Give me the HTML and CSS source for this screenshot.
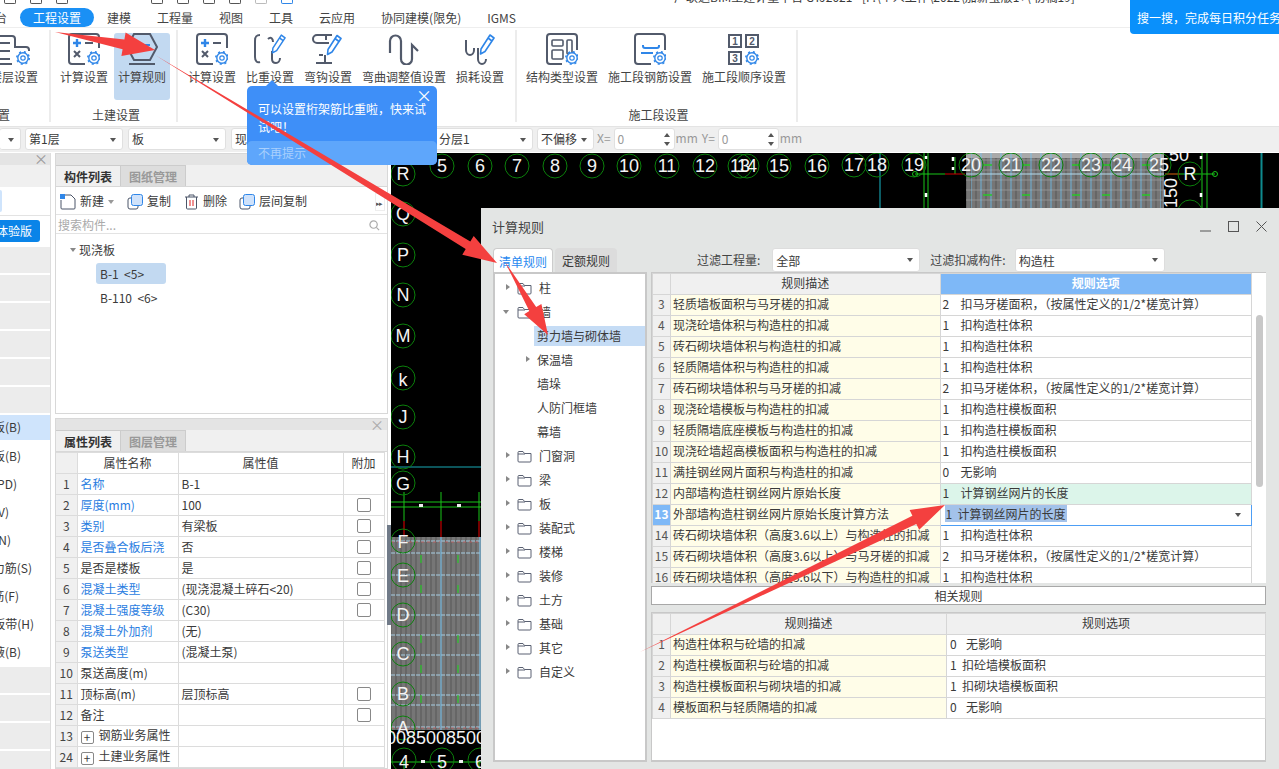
FILE: index.html
```html
<!DOCTYPE html>
<html lang="zh">
<head>
<meta charset="utf-8">
<title>计算规则</title>
<link rel="stylesheet" href="styles.css">
</head>
<body>
<svg class="defs" width="0" height="0">
  <defs>
    <symbol id="gear" viewBox="0 0 14 14">
      <circle cx="7" cy="7" r="5.2" fill="#fff" stroke="#2f86e8" stroke-width="1.4"/>
      <circle cx="7" cy="7" r="6.2" fill="none" stroke="#2f86e8" stroke-width="1.6" stroke-dasharray="2 2.9"/>
      <circle cx="7" cy="7" r="2.2" fill="none" stroke="#2f86e8" stroke-width="1.2"/>
    </symbol>
    <symbol id="pencil" viewBox="0 0 16 22">
      <path d="M11 1.5l4 3L6 18l-4.500 2.500L2 15.500z" fill="#fff" stroke="#2f86e8" stroke-width="1.6" stroke-linejoin="round"/>
      <path d="M9 4.500l4 3" stroke="#2f86e8" stroke-width="1.6"/>
    </symbol>
    <symbol id="calc" viewBox="0 0 32 32">
      <path d="M17 31H4a3 3 0 0 1-3-3V4a3 3 0 0 1 3-3h24a3 3 0 0 1 3 3v11" fill="none" stroke="#525a6b" stroke-width="2"/>
      <path d="M5 10h8M9 6v8" stroke="#2f86e8" stroke-width="2.400"/>
      <path d="M17 10h8" stroke="#525a6b" stroke-width="2"/>
      <path d="M6 18l6 6M12 18l-6 6" stroke="#525a6b" stroke-width="2"/>
    </symbol>
    <symbol id="folder" viewBox="0 0 15 13">
      <path d="M1 2.500a1 1 0 0 1 1-1h4l1.500 2H14v7.500a1 1 0 0 1-1 1H2a1 1 0 0 1-1-1z" fill="none" stroke="#5a6172" stroke-width="1"/>
      <path d="M1 4h7" stroke="#5a6172" stroke-width="1"/>
    </symbol>
    <symbol id="copy" viewBox="0 0 16 16">
      <rect x="1" y="4" width="10" height="11" rx="2" fill="#fff" stroke="#4b5568"/>
      <rect x="4.500" y="0.500" width="11" height="11" rx="2" fill="#cfe2fb" stroke="#2f86e8"/>
    </symbol>
  </defs>
</svg>

<div class="page">
  <div class="strip">
    <span class="stub"></span><span class="stub"></span><span class="stub"></span>
    <span class="stub stub-far"></span><span class="stub"></span><span class="stub"></span><span class="stub"></span>
    <span class="stub stub-faint"></span><span class="stub stub-blue"></span>
    <span class="app-title">广联达BIM土建计量平台 GTJ2021 - [F:\个人工作\2022\加薪宝版1+\ 初稿19]</span>
  </div>

  <nav class="menu">
    <span class="menu-item menu-cut">平台</span>
    <span class="menu-item menu-on">工程设置</span>
    <span class="menu-item">建模</span>
    <span class="menu-item">工程量</span>
    <span class="menu-item">视图</span>
    <span class="menu-item">工具</span>
    <span class="menu-item">云应用</span>
    <span class="menu-item">协同建模(限免)</span>
    <span class="menu-item">IGMS</span>
  </nav>

  <section class="ribbon">
    <div class="group group-a">
      <div class="tools">
        <div class="tool tool-clip">
          <svg class="ico" viewBox="0 0 32 32"><path d="M2 3h12a3 3 0 0 1 3 3v8h11a3 3 0 0 1 3 3v1M2 10h10M2 18h10M2 26h10M2 31h12" fill="none" stroke="#525a6b" stroke-width="2"/><use href="#gear" x="18" y="18" width="14" height="14"/></svg>
          <span>楼层设置</span>
        </div>
      </div>
      <div class="group-name">设置</div>
    </div>
    <div class="group group-b">
      <div class="tools">
        <div class="tool">
          <svg class="ico"><use href="#calc"/><use href="#gear" x="19" y="18" width="14" height="14"/></svg>
          <span>计算设置</span>
        </div>
        <div class="tool tool-on">
          <svg class="ico" viewBox="0 0 32 32"><path d="M8 1h16l7 13-7 13H8L1 14z" fill="none" stroke="#525a6b" stroke-width="2"/><path d="M8 12h6M11 9v6" stroke="#2f86e8" stroke-width="2"/><path d="M18 12h6" stroke="#2f86e8" stroke-width="2"/><path d="M3 31h26" stroke="#525a6b" stroke-width="2"/></svg>
          <span>计算规则</span>
        </div>
      </div>
      <div class="group-name">土建设置</div>
    </div>
    <div class="group group-c">
      <div class="tools">
        <div class="tool">
          <svg class="ico"><use href="#calc"/><use href="#gear" x="19" y="18" width="14" height="14"/></svg>
          <span>计算设置</span>
        </div>
        <div class="tool">
          <svg class="ico" viewBox="0 0 32 32"><path d="M6 2C2 2 1 4 1 8v16c0 4 2 6 5 5M14 6c3-3 5 0 5 3M18 18v8c0 3 2 4 4 4s4-2 4-5" fill="none" stroke="#525a6b" stroke-width="2"/><use href="#pencil" x="17" y="0" width="15" height="22"/></svg>
          <span>比重设置</span>
        </div>
        <div class="tool">
          <svg class="ico" viewBox="0 0 32 32"><path d="M20 2H5a4 4 0 0 0 0 8h12M14 3v4M13 22v8M4 30h16M11 22H7" fill="none" stroke="#525a6b" stroke-width="2"/><use href="#pencil" x="14" y="1" width="16" height="22"/></svg>
          <span>弯钩设置</span>
        </div>
        <div class="tool">
          <svg class="ico" viewBox="0 0 32 32"><path d="M2 19V7a5.500 5.500 0 0 1 11 0v18a5.500 5.500 0 0 0 11 0V11l6 6" fill="none" stroke="#525a6b" stroke-width="2.200" transform="translate(0 1)"/></svg>
          <span>弯曲调整值设置</span>
        </div>
        <div class="tool">
          <svg class="ico" viewBox="0 0 32 32"><path d="M2 7v10c0 3 2 5 4 5s4-2 4-5v-2M14 15v11c0 3 2 5 4 5s4-2 4-5" fill="none" stroke="#525a6b" stroke-width="2"/><use href="#pencil" x="15" y="0" width="16" height="23"/></svg>
          <span>损耗设置</span>
        </div>
      </div>
    </div>
    <div class="group group-d">
      <div class="tools">
        <div class="tool">
          <svg class="ico" viewBox="0 0 32 32"><path d="M16 31H4a3 3 0 0 1-3-3V4a3 3 0 0 1 3-3h24a3 3 0 0 1 3 3v13" fill="none" stroke="#525a6b" stroke-width="2"/><rect x="6" y="7" width="11" height="6" rx="1" fill="none" stroke="#525a6b" stroke-width="1.600"/><rect x="21" y="7" width="5" height="14" rx="1" fill="none" stroke="#525a6b" stroke-width="1.600"/><rect x="6" y="17" width="11" height="9" rx="1" fill="none" stroke="#525a6b" stroke-width="1.600"/><use href="#gear" x="19" y="18" width="14" height="14"/></svg>
          <span>结构类型设置</span>
        </div>
        <div class="tool">
          <svg class="ico" viewBox="0 0 32 32"><path d="M17 31H4a3 3 0 0 1-3-3V4a3 3 0 0 1 3-3h24a3 3 0 0 1 3 3v13" fill="none" stroke="#525a6b" stroke-width="2"/><path d="M9 12v1a2 2 0 0 0 2 2h12a2 2 0 0 0 2-2v-1M7 20h12" fill="none" stroke="#2f86e8" stroke-width="2"/><use href="#gear" x="19" y="18" width="14" height="14"/></svg>
          <span>施工段钢筋设置</span>
        </div>
        <div class="tool">
          <svg class="ico" viewBox="0 0 32 32">
            <g fill="none" stroke="#525a6b" stroke-width="2"><rect x="1" y="2" width="12" height="12"/><rect x="18" y="2" width="12" height="12"/><rect x="1" y="19" width="12" height="12"/></g>
            <g class="ico-digit"><text x="7" y="12">1</text><text x="24" y="12">2</text><text x="7" y="29">3</text></g>
            <use href="#gear" x="17" y="18" width="14" height="14"/></svg>
          <span>施工段顺序设置</span>
        </div>
      </div>
      <div class="group-name">施工段设置</div>
    </div>
  </section>

  <div class="bar">
    <span class="pick pick-a"></span>
    <span class="pick pick-b">第1层</span>
    <span class="pick pick-b">板</span>
    <span class="pick pick-c">现浇板</span>
    <span class="pick pick-d">分层1</span>
    <span class="pick pick-e">不偏移</span>
    <span class="dim">X=</span>
    <span class="spin">0</span>
    <span class="dim">mm</span>
    <span class="dim dim-y">Y=</span>
    <span class="spin">0</span>
    <span class="dim">mm</span>
  </div>

  <main class="main">
    <aside class="nav">
      <div class="nav-head">×</div>
      <div class="nav-pad"></div>
      <div class="nav-white"><i></i></div>
      <div class="nav-btn-row"><span class="nav-btn">体验版</span></div>
      <div class="nav-gray"></div><div class="nav-gray"></div><div class="nav-gray"></div>
      <div class="nav-gray"></div><div class="nav-gray"></div><div class="nav-gray"></div>
      <div class="nav-row nav-sel e21"><span>现浇板(B)</span></div>
      <div class="nav-row e21"><span>叠合板(B)</span></div>
      <div class="nav-row e17"><span>预制板(PD)</span></div>
      <div class="nav-row e9"><span>柱帽(V)</span></div>
      <div class="nav-row e11"><span>板洞(N)</span></div>
      <div class="nav-row e32"><span>板受力筋(S)</span></div>
      <div class="nav-row e19"><span>板负筋(F)</span></div>
      <div class="nav-row e34"><span>楼层板带(H)</span></div>
      <div class="nav-row e21"><span>板加腋(B)</span></div>
      <div class="nav-gray nav-gray-first"></div><div class="nav-gray"></div><div class="nav-gray"></div><div class="nav-gray"></div>
    </aside>

    <div class="side">
      <section class="card card-top">
        <div class="card-head"></div>
        <div class="tabs">
          <span class="tab tab-on">构件列表</span>
          <span class="tab">图纸管理</span>
        </div>
        <div class="actions">
          <span class="act act-new">
            <svg class="act-ico" viewBox="0 0 16 16"><path d="M4 1h7l4 4v9a1 1 0 0 1-1 1H2a1 1 0 0 1-1-1V6" fill="none" stroke="#4b5568"/><rect x="0" y="0" width="5" height="5" fill="#2f86e8"/></svg>新建<i class="caret"></i>
          </span>
          <span class="act act-copy"><svg class="act-ico"><use href="#copy"/></svg>复制</span>
          <span class="act act-del">
            <svg class="act-ico act-trash" viewBox="0 0 13 16"><path d="M0 3h13M4 3V1h5v2M1.500 3v11a1 1 0 0 0 1 1h8a1 1 0 0 0 1-1V3" fill="none" stroke="#4b5568"/><path d="M5 6v6M8 6v6" stroke="#e02020"/></svg>删除
          </span>
          <span class="act"><svg class="act-ico"><use href="#copy"/></svg>层间复制</span>
          <span class="act-more">▸▸</span>
        </div>
        <div class="search">
          <span>搜索构件...</span>
          <svg class="search-ico" viewBox="0 0 12 12"><circle cx="5" cy="5" r="4" fill="none" stroke="#aaa" stroke-width="1.300"/><path d="M8 8l3 3" stroke="#aaa" stroke-width="1.300"/></svg>
        </div>
        <div class="parts">
          <div class="part-root"><i class="tri-down"></i>现浇板</div>
          <div class="part part-on">B-1 &nbsp;&lt;5&gt;</div>
          <div class="part">B-110 &nbsp;&lt;6&gt;</div>
        </div>
      </section>

      <section class="card card-bottom">
        <div class="card-head"></div>
        <div class="tabs">
          <span class="tab tab-on">属性列表</span>
          <span class="tab">图层管理</span>
        </div>
        <table class="props">
          <colgroup><col class="c-n"><col class="c-k"><col class="c-v"><col class="c-x"></colgroup>
          <tr class="props-head"><td></td><td>属性名称</td><td>属性值</td><td>附加</td></tr>
          <tr><td class="num">1</td><td class="lnk">名称</td><td>B-1</td><td></td></tr>
          <tr><td class="num">2</td><td class="lnk">厚度(mm)</td><td>100</td><td class="chk"><i></i></td></tr>
          <tr><td class="num">3</td><td class="lnk">类别</td><td>有梁板</td><td class="chk"><i></i></td></tr>
          <tr><td class="num">4</td><td class="lnk">是否叠合板后浇</td><td>否</td><td class="chk"><i></i></td></tr>
          <tr><td class="num">5</td><td>是否是楼板</td><td>是</td><td class="chk"><i></i></td></tr>
          <tr><td class="num">6</td><td class="lnk">混凝土类型</td><td>(现浇混凝土碎石&lt;20)</td><td class="chk"><i></i></td></tr>
          <tr><td class="num">7</td><td class="lnk">混凝土强度等级</td><td>(C30)</td><td class="chk"><i></i></td></tr>
          <tr><td class="num">8</td><td class="lnk">混凝土外加剂</td><td>(无)</td><td></td></tr>
          <tr><td class="num">9</td><td class="lnk">泵送类型</td><td>(混凝土泵)</td><td></td></tr>
          <tr><td class="num">10</td><td>泵送高度(m)</td><td></td><td></td></tr>
          <tr><td class="num">11</td><td>顶标高(m)</td><td>层顶标高</td><td class="chk"><i></i></td></tr>
          <tr><td class="num">12</td><td>备注</td><td></td><td class="chk"><i></i></td></tr>
          <tr><td class="num">13</td><td><b class="plus">+</b>钢筋业务属性</td><td></td><td></td></tr>
          <tr><td class="num">24</td><td><b class="plus">+</b>土建业务属性</td><td></td><td></td></tr>
        </table>
      </section>
    </div>

    <div class="grip"><i></i></div>

    <div class="cad">
      <svg class="cad-art" viewBox="391 153 888 616">
        <defs>
          <pattern id="stripe" width="5" height="5" patternUnits="userSpaceOnUse"><rect width="5" height="5" fill="#767676"/><rect width="2" height="5" fill="#666"/></pattern>
          <pattern id="vblue" width="10" height="10" patternUnits="userSpaceOnUse"><path d="M1 0V10" stroke="#7cc0e6" stroke-width="1"/></pattern>
        </defs>

        <path d="M391 502H481M391 507H481M404 492V521M441 492V521M479 492V521" stroke="#19c419" stroke-width="1"/>
        <path d="M404 521V537M441 521V537M479 521V537" stroke="#c40000" stroke-width="1.200"/>
        <path d="M391 467H481" stroke="#18a8b4"/>
        <rect x="419" y="504" width="4" height="3" fill="#eee"/><rect x="457" y="504" width="4" height="3" fill="#eee"/>

        <rect x="391" y="537" width="90" height="193" fill="url(#stripe)"/>
        <path d="M391 541H481M391 553H481M391 575H481M391 595H481M391 615H481M391 635H481M391 655H481M391 675H481M391 695H481M391 705H481M391 727H481" stroke="#a6cde2" stroke-dasharray="4 1" stroke-width="1"/>
        <path d="M391 542H481M391 728H481" stroke="#c65a5a" stroke-dasharray="3 3" stroke-width=".8"/>
        <path d="M441 537V730M480 537V730" stroke="#7cc0e6" stroke-width="1.200"/>
        <path d="M421 555v8M458 555v8M421 585v8M458 585v8M421 635v8M458 635v8M421 665v8M458 665v8M421 695v8M458 695v8" stroke="#28c828" stroke-width="1.200"/>

        <path d="M391 762H481M404 762V769M441 762V769M479 762V769" stroke="#19c419"/>
        <rect x="421" y="760" width="4" height="3" fill="#eee"/><rect x="459" y="760" width="4" height="3" fill="#eee"/>

        <rect x="966" y="153" width="198" height="55" fill="url(#stripe)"/>
        <rect x="966" y="153" width="198" height="5" fill="#a9a9a9"/>
        <path d="M966 160H1164M966 170H1164M966 180H1164M966 190H1164M966 200H1164" stroke="#929292" stroke-width="1"/>
        <rect x="971" y="153" width="190" height="55" fill="url(#vblue)"/>
        <path d="M966 174H1164" stroke="#b4dcee"/>
        <path d="M983 165h9M1022 165h8M1072 165h8M1102 165h8M1142 165h8M983 195h9M1022 195h8M1072 195h8M1102 195h8M1142 195h8" stroke="#28c828" stroke-width="1.500"/>
        <path d="M880 153V208" stroke="#18b8c8"/>
        <path d="M1261.500 153V208" stroke="#0e8a8e" stroke-width="2"/>
        <path d="M924 153V208M928 153V208M1202 153V208M1207 153V208" stroke="#19c419"/>
        <path d="M915 174H945M955 157V174M1165 174H1215" stroke="#19c419"/>
        <path d="M945 174H965M1165 174H1180" stroke="#d00000" stroke-width="1.200"/>
        <circle cx="915" cy="174" r="2.500" fill="none" stroke="#19c419"/>
        <circle cx="1215" cy="174" r="2.500" fill="none" stroke="#19c419"/>
        <path d="M926 156v3M926 193v4M953 157v4M953 167v3M1201 156v3M1201 193v4" stroke="#fff" stroke-width="2.500"/>

        <g class="cad-ring">
          <circle cx="442" cy="166" r="12"/><circle cx="480" cy="166" r="12"/><circle cx="517" cy="166" r="12"/><circle cx="555" cy="166" r="12"/><circle cx="592" cy="166" r="12"/><circle cx="629" cy="166" r="12"/><circle cx="667" cy="166" r="12"/><circle cx="705" cy="166" r="12"/><circle cx="740" cy="166" r="12"/><circle cx="747" cy="166" r="12"/><circle cx="779" cy="166" r="12"/><circle cx="817" cy="166" r="12"/><circle cx="854" cy="165" r="12"/><circle cx="877" cy="165" r="12"/><circle cx="914" cy="165" r="12"/><circle cx="971" cy="165" r="12"/><circle cx="1011" cy="165" r="12"/><circle cx="1051" cy="165" r="12"/><circle cx="1091" cy="165" r="12"/><circle cx="1122" cy="165" r="12"/><circle cx="1159" cy="165" r="12"/>
          <circle cx="403" cy="174" r="12"/><circle cx="403" cy="214" r="12"/><circle cx="403" cy="255" r="12"/><circle cx="403" cy="295" r="12"/><circle cx="403" cy="336" r="12"/><circle cx="403" cy="378" r="12"/><circle cx="403" cy="417" r="12"/><circle cx="403" cy="457" r="12"/><circle cx="403" cy="483" r="12"/><circle cx="403" cy="541" r="12"/><circle cx="403" cy="575" r="12"/><circle cx="403" cy="615" r="12"/><circle cx="403" cy="654" r="12"/><circle cx="403" cy="694" r="12"/><circle cx="403" cy="728" r="12"/>
          <circle cx="1190" cy="174" r="12"/><circle cx="1190" cy="212" r="12"/>
          <circle cx="404" cy="760" r="12"/><circle cx="442" cy="760" r="12"/><circle cx="480" cy="760" r="12"/>
        </g>
        <g class="cad-label">
          <text x="442" y="172">5</text><text x="480" y="172">6</text><text x="517" y="172">7</text><text x="555" y="172">8</text><text x="592" y="172">9</text><text x="629" y="172">10</text><text x="667" y="172">11</text><text x="705" y="172">12</text><text x="740" y="172">13</text><text x="747" y="172">14</text><text x="779" y="172">15</text><text x="817" y="172">16</text><text x="854" y="171">17</text><text x="877" y="171">18</text><text x="914" y="171">19</text><text x="971" y="171">20</text><text x="1011" y="171">21</text><text x="1051" y="171">22</text><text x="1091" y="171">23</text><text x="1122" y="171">24</text><text x="1159" y="171">25</text>
          <text x="403" y="180">R</text><text x="403" y="220">Q</text><text x="403" y="261">P</text><text x="403" y="301">N</text><text x="403" y="342">M</text><text x="403" y="386">k</text><text x="403" y="423">J</text><text x="403" y="463">H</text><text x="403" y="490">G</text><text x="403" y="548">F</text><text x="403" y="582">E</text><text x="403" y="621">D</text><text x="403" y="660">C</text><text x="403" y="700">B</text><text x="403" y="734">A</text>
          <text x="1190" y="180">R</text>
          <text x="404" y="768">4</text><text x="442" y="768">5</text><text x="480" y="768">6</text>
          <text x="436" y="744">0085008500</text>
          <text x="1179" y="161">50</text>
          <text transform="translate(1177 208) rotate(-90)" class="cad-side">150</text>
        </g>
      </svg>
    </div>
  </main>

  <div class="tip-search">搜一搜，完成每日积分任务</div>

  <aside class="hint">
    <div class="hint-body">
      <span class="hint-x">×</span>
      可以设置桁架筋比重啦，快来试试吧！
    </div>
    <div class="hint-foot">不再提示</div>
  </aside>

  <section class="dialog">
    <header class="dlg-top">
      <span class="dlg-title">计算规则</span>
      <span class="dlg-ctl">
        <svg viewBox="0 0 11 11"><path d="M0 10h11" stroke="#555"/></svg>
        <svg viewBox="0 0 11 11"><rect x=".5" y=".5" width="10" height="10" fill="none" stroke="#555"/></svg>
        <svg viewBox="0 0 11 11"><path d="M.5.5l10 10M10.500.5l-10 10" stroke="#555"/></svg>
      </span>
    </header>
    <div class="dlg-filter">
      <span class="dtab dtab-on">清单规则</span>
      <span class="dtab">定额规则</span>
      <label class="flt flt-a">过滤工程量:</label>
      <span class="dsel dsel-a">全部</span>
      <label class="flt flt-b">过滤扣减构件:</label>
      <span class="dsel dsel-b">构造柱</span>
    </div>
    <div class="dlg-body">
      <div class="tree">
        <div class="node"><i class="tri"></i><svg class="fold"><use href="#folder"/></svg>柱</div>
        <div class="node"><i class="tri-down"></i><svg class="fold"><use href="#folder"/></svg>墙</div>
        <div class="leaf leaf-on">剪力墙与砌体墙</div>
        <div class="leaf"><i class="tri tri-in"></i>保温墙</div>
        <div class="leaf">墙垛</div>
        <div class="leaf">人防门框墙</div>
        <div class="leaf">幕墙</div>
        <div class="node"><i class="tri"></i><svg class="fold"><use href="#folder"/></svg>门窗洞</div>
        <div class="node"><i class="tri"></i><svg class="fold"><use href="#folder"/></svg>梁</div>
        <div class="node"><i class="tri"></i><svg class="fold"><use href="#folder"/></svg>板</div>
        <div class="node"><i class="tri"></i><svg class="fold"><use href="#folder"/></svg>装配式</div>
        <div class="node"><i class="tri"></i><svg class="fold"><use href="#folder"/></svg>楼梯</div>
        <div class="node"><i class="tri"></i><svg class="fold"><use href="#folder"/></svg>装修</div>
        <div class="node"><i class="tri"></i><svg class="fold"><use href="#folder"/></svg>土方</div>
        <div class="node"><i class="tri"></i><svg class="fold"><use href="#folder"/></svg>基础</div>
        <div class="node"><i class="tri"></i><svg class="fold"><use href="#folder"/></svg>其它</div>
        <div class="node"><i class="tri"></i><svg class="fold"><use href="#folder"/></svg>自定义</div>
      </div>
      <div class="rules">
        <div class="rules-top">
          <div class="rules-clip">
            <table class="rt">
              <colgroup><col class="r-n"><col class="r-d"><col class="r-o"></colgroup>
              <tr class="rt-head"><td></td><td>规则描述</td><td class="rt-hot">规则选项</td></tr>
              <tr><td class="rn">3</td><td class="rd">轻质墙板面积与马牙槎的扣减</td><td class="ro"><em>2</em>扣马牙槎面积，（按属性定义的1/2*槎宽计算）</td></tr>
              <tr><td class="rn">4</td><td class="rd">现浇砼墙体积与构造柱的扣减</td><td class="ro"><em>1</em>扣构造柱体积</td></tr>
              <tr><td class="rn">5</td><td class="rd">砖石砌块墙体积与构造柱的扣减</td><td class="ro"><em>1</em>扣构造柱体积</td></tr>
              <tr><td class="rn">6</td><td class="rd">轻质隔墙体积与构造柱的扣减</td><td class="ro"><em>1</em>扣构造柱体积</td></tr>
              <tr><td class="rn">7</td><td class="rd">砖石砌块墙体积与马牙槎的扣减</td><td class="ro"><em>2</em>扣马牙槎体积，（按属性定义的1/2*槎宽计算）</td></tr>
              <tr><td class="rn">8</td><td class="rd">现浇砼墙模板与构造柱的扣减</td><td class="ro"><em>1</em>扣构造柱模板面积</td></tr>
              <tr><td class="rn">9</td><td class="rd">轻质隔墙底座模板与构造柱的扣减</td><td class="ro"><em>1</em>扣构造柱模板面积</td></tr>
              <tr><td class="rn">10</td><td class="rd">现浇砼墙超高模板面积与构造柱的扣减</td><td class="ro"><em>1</em>扣构造柱模板面积</td></tr>
              <tr><td class="rn">11</td><td class="rd">满挂钢丝网片面积与构造柱的扣减</td><td class="ro"><em>0</em>无影响</td></tr>
              <tr><td class="rn">12</td><td class="rd">内部墙构造柱钢丝网片原始长度</td><td class="ro ro-mint"><em>1</em>计算钢丝网片的长度</td></tr>
              <tr><td class="rn rn-on">13</td><td class="rd">外部墙构造柱钢丝网片原始长度计算方法</td><td class="ro ro-edit"><mark>1&nbsp;&nbsp;计算钢丝网片的长度</mark><i class="caret"></i></td></tr>
              <tr><td class="rn">14</td><td class="rd">砖石砌块墙体积（高度3.6以上）与构造柱的扣减</td><td class="ro"><em>1</em>扣构造柱体积</td></tr>
              <tr><td class="rn">15</td><td class="rd">砖石砌块墙体积（高度3.6以上）与马牙槎的扣减</td><td class="ro"><em>2</em>扣马牙槎体积，（按属性定义的1/2*槎宽计算）</td></tr>
              <tr><td class="rn">16</td><td class="rd">砖石砌块墙体积（高度3.6以下）与构造柱的扣减</td><td class="ro"><em>1</em>扣构造柱体积</td></tr>
            </table>
          </div>
          <div class="rail"><i></i></div>
        </div>
        <div class="related">相关规则</div>
        <div class="rules-low">
          <table class="rt rt-low">
            <colgroup><col class="r-n"><col class="r-d2"><col class="r-o2"></colgroup>
            <tr class="rt-head"><td></td><td>规则描述</td><td>规则选项</td></tr>
            <tr><td class="rn">1</td><td class="rd">构造柱体积与砼墙的扣减</td><td class="ro ro-low"><em>0</em>无影响</td></tr>
            <tr><td class="rn">2</td><td class="rd">构造柱模板面积与砼墙的扣减</td><td class="ro ro-low ro-tight"><em>1</em>扣砼墙模板面积</td></tr>
            <tr><td class="rn">3</td><td class="rd">构造柱模板面积与砌块墙的扣减</td><td class="ro ro-low ro-tight"><em>1</em>扣砌块墙模板面积</td></tr>
            <tr><td class="rn">4</td><td class="rd">模板面积与轻质隔墙的扣减</td><td class="ro ro-low"><em>0</em>无影响</td></tr>
          </table>
        </div>
      </div>
    </div>
  </section>

  <svg class="arrows" viewBox="0 0 1279 769">
    <polygon points="55,32 122.600,49.200 121.400,56.100 155,50 125.600,32.500 124.400,39.400"/>
    <polygon points="155,55 465.700,249.100 462.300,254.700 497,263 473.700,235.900 470.300,241.500"/>
    <polygon points="505,262 529.300,311.100 524.200,314.200 548,335 541.400,304 536.200,307.100"/>
    <polygon points="640,652 916.300,523.900 919.200,529.700 945,505 909.600,509.900 912.400,515.700"/>
  </svg>
</div>
</body>
</html>
```

FILE: styles.css
```css
* { box-sizing: border-box; }
html, body { margin: 0; padding: 0; }
body { font: 12px/1.2 "Noto Sans CJK SC", "Liberation Sans", sans-serif; color: #3a3a3a; background: #fff; }
i, em { font-style: normal; }
.defs { position: absolute; }
.page { position: relative; width: 1279px; height: 769px; overflow: hidden; background: #fff; }

/* clipped title strip */
.strip { height: 8px; display: flex; gap: 14px; padding-left: 4px; overflow: hidden; }
.stub { flex: none; width: 12px; height: 4px; border: 1px solid #555; border-top: 0; border-radius: 0 0 2px 2px; }
.stub-far { margin-left: 69px; }
.stub-faint { border-color: #bbb; }
.stub-blue { border-color: #2f86e8; }
.app-title { position: absolute; left: 674px; top: -11px; width: 420px; line-height: 16px; white-space: nowrap; }

/* menu */
.menu { height: 20px; display: flex; margin-left: -30px; align-items: center; border-bottom: 1px solid #eee; }
.menu-item { padding: 0 13px; line-height: 19px; height: 19px; white-space: nowrap; color: #444; }
.menu-on { background: #1a90f5; color: #fff; border-radius: 10px; }

/* ribbon */
.ribbon { height: 98px; display: flex; padding: 2px 0 4px; }
.group { display: flex; flex-direction: column; border-right: 2px solid #ececec; flex: none; }
.tools { display: flex; flex: 1; align-items: flex-start; padding-top: 3px; }
.group-a { width: 51px; }
.group-a .tools { justify-content: flex-end; padding-right: 6px; overflow: hidden; }
.group-b { width: 127px; padding-left: 5px; }
.group-b .tools { gap: 2px; }
.group-c { width: 339px; padding-left: 5px; }
.group-d { width: 281px; padding-left: 4px; }
.tool { flex: none; padding: 0 5px; display: flex; flex-direction: column; align-items: center; white-space: nowrap; height: 67px; border-radius: 3px; color: #444; }
.group-b .tool { width: 56px; }
.tool-on { background: #c2d9f1; }
.ico { width: 32px; height: 32px; flex: none; margin-bottom: 5px; }
.ico-digit text { font-size: 10px; text-anchor: middle; fill: #525a6b; font-family: "Liberation Sans", sans-serif; font-weight: 700; }
.group-name { text-align: center; height: 20px; padding-top: 6px; line-height: 14px; color: #444; white-space: nowrap; }
.group-a .group-name { margin-left: -14px; text-align: left; }

/* selection bar */
.bar { height: 26px; background: #efefef; border-top: 1px solid #e4e4e4; display: flex; align-items: center; padding: 0 0 2px; margin-bottom: 1px; }
.pick { position: relative; flex: none; height: 22px; background: #fff; border: 1px solid #e0e0e0; border-radius: 3px; line-height: 20px; padding-left: 3px; margin-right: 4px; }
.pick::after, .dsel::after { content: ""; position: absolute; right: 6px; top: 9px; border: 3px solid transparent; border-top: 4px solid #555; border-bottom: 0; }
.pick-a { width: 21px; border-left: 0; margin-right: 4px; }
.pick-b { width: 98px; margin-right: 5px; }
.pick-c { width: 198px; margin-right: 5px; }
.pick-d { width: 99px; padding-left: 4px; }
.pick-e { width: 57px; margin-right: 3px; }
.dim { color: #999; margin: 0 2px 0 0; }
.dim-y { margin-left: 2px; }
.spin { position: relative; flex: none; width: 61px; height: 22px; background: #fff; border: 1px solid #e0e0e0; border-radius: 3px; color: #999; line-height: 20px; padding-left: 3px; margin: 0 1px 0 1px; }
.spin::before { content: ""; position: absolute; right: 4px; top: 4px; border: 3px solid transparent; border-bottom: 4px solid #555; border-top: 0; }
.spin::after { content: ""; position: absolute; right: 4px; bottom: 3px; border: 3px solid transparent; border-top: 4px solid #555; border-bottom: 0; }

/* main */
.main { height: 616px; display: flex; }
.nav { width: 51px; flex: none; border-right: 1px solid #ddd; overflow: hidden; }
.nav-head { height: 12px; background: #e4e4e4; text-align: right; padding-right: 2px; color: #999; line-height: 11px; font-size: 14px; }
.nav-pad { height: 22px; background: #f0f0f0; }
.nav-white { height: 29px; border-bottom: 1px solid #e3e3e3; padding-top: 3px; }
.nav-white i { display: block; width: 2px; height: 22px; background: #cfe4fc; border-radius: 0 2px 2px 0; }
.nav-btn-row { height: 31px; padding-top: 4px; overflow: hidden; }
.nav-btn { display: block; width: 40px; height: 22px; line-height: 22px; background: #0a84e8; color: #fff; border-radius: 0 3px 3px 0; text-indent: -4px; white-space: nowrap; }
.nav-gray { height: 26px; margin-bottom: 2px; background: #ececec; }
.nav-gray-first { margin-top: 1px; }
.nav-row { height: 28px; display: flex; justify-content: flex-end; align-items: center; white-space: nowrap; overflow: hidden; }
.nav-row span { flex: none; }
.nav-sel { height: 25px; margin-bottom: 2px; background: #cfe4fc; }
.e9 { padding-right: 41px; } .e11 { padding-right: 39px; } .e17 { padding-right: 33px; } .e19 { padding-right: 31px; }
.e21 { padding-right: 29px; } .e32 { padding-right: 18px; } .e34 { padding-right: 16px; }

.side { width: 333px; margin-left: 4px; flex: none; display: flex; flex-direction: column; gap: 4px; }
.card { border: 1px solid #d8d8d8; background: #fff; }
.card-top { height: 261px; }
.card-bottom { height: 351px; overflow: hidden; }
.card-head { height: 11px; background: #e4e4e4; position: relative; }
.card-head::after { content: "×"; position: absolute; right: 3px; top: -2px; color: #aaa; font-size: 14px; line-height: 14px; }
.tabs { height: 22px; display: flex; background: #f0f0f0; border-bottom: 1px solid #d8d8d8; }
.tab { width: 65px; text-align: center; line-height: 21px; color: #999; font-weight: 700; background: #ddd; border: 1px solid #ccc; border-width: 1px 1px 0 0; }
.tab-on { color: #333; background: #f0f0f0; }
.actions { height: 28px; display: flex; align-items: center; padding: 2px 0 0 4px; border-bottom: 1px solid #e3e3e3; position: relative; }
.act { display: flex; align-items: center; gap: 4px; margin-right: 14px; white-space: nowrap; }
.act-new { margin-right: 13px; }
.act-ico { width: 16px; height: 16px; flex: none; }
.act-trash { width: 13px; }
.act-del { margin-right: 12px; gap: 5px; }
.caret { display: inline-block; width: 0; height: 0; border: 3px solid transparent; border-top: 4px solid #999; border-bottom: 0; }
.act-more { margin-left: auto; margin-right: 2px; width: 10px; height: 18px; line-height: 18px; font-size: 7px; letter-spacing: -1px; border: 1px solid #eee; color: #555; overflow: hidden; white-space: nowrap; }
.search { height: 19px; display: flex; align-items: center; justify-content: space-between; padding: 2px 7px 0 2px; color: #aaa; border-bottom: 1px solid #e3e3e3; }
.search-ico { width: 11px; height: 11px; }
.parts { padding-top: 4px; }
.part-root { height: 25px; padding-left: 23px; line-height: 24px; position: relative; }
.tri-down { position: absolute; left: 14px; top: 10px; border: 3.500px solid transparent; border-top: 4px solid #888; border-bottom: 0; }
.part { margin-left: 40px; padding-left: 4px; width: 70px; height: 21px; line-height: 21px; white-space: nowrap; margin-bottom: 3px; border-radius: 3px; }
.part-on { background: #c2d9f1; }

.props { border-collapse: collapse; table-layout: fixed; width: 328px; }
.c-n { width: 21px; } .c-k { width: 101px; } .c-v { width: 165px; } .c-x { width: 41px; }
.props td { height: 21px; padding: 0 3px; border: 1px solid #dcdcdc; white-space: nowrap; overflow: hidden; }
.props-head td { text-align: center; background: #fff; }
.props td:first-child { background: #f0f0f0; text-align: center; border-left: 0; padding: 0; }
.num { color: #444; }
.lnk { color: #2a7de1; }
.chk { text-align: center; padding: 0; }
.chk i { display: block; width: 14px; height: 14px; margin: 0 auto; border: 1px solid #888; border-radius: 2px; }
.plus { display: inline-block; width: 13px; height: 13px; margin-right: 5px; border: 1px solid #888; border-radius: 2px; line-height: 10px; text-align: center; font-weight: 400; vertical-align: -2px; }

.grip { width: 3px; flex: none; position: relative; background: #fff; }
.grip i { display: block; width: 4px; height: 100px; margin-top: 372px; margin-left: -1px; background: #707a88; }

.cad { flex: 1; background: #000; overflow: hidden; }
.cad-art { display: block; width: 888px; height: 616px; }
.cad-ring circle { fill: none; stroke: #0b800b; stroke-width: 1; }
.cad-label text { fill: #f4f4f4; font: 18px "Liberation Sans", sans-serif; text-anchor: middle; }
.cad-label .cad-side { text-anchor: start; }

/* top-right tip */
.tip-search { position: absolute; right: 0; top: 0; width: 149px; height: 34px; padding: 10px 0 0 7px; line-height: 16px; background: #0a90fb; color: #fff; white-space: nowrap; overflow: hidden; border-radius: 0 0 0 4px; }

/* hint balloon */
.hint { position: absolute; left: 247px; top: 86px; width: 190px; height: 79px; background: #3e8ff8; border-radius: 5px; color: #fff; }
.hint::before { content: ""; position: absolute; left: 19px; top: -6px; border: 6px solid transparent; border-bottom: 6px solid #3e8ff8; border-top: 0; }
.hint-body { height: 55px; padding: 14px 10px 0 11px; line-height: 18px; position: relative; }
.hint-x { position: absolute; right: 5px; top: 1px; font-size: 16px; line-height: 16px; }
.hint-foot { height: 24px; background: #5ea6fb; line-height: 24px; padding-left: 11px; color: #a9d0fd; border-radius: 5px; }

/* dialog */
.dialog { position: absolute; left: 481px; top: 208px; width: 798px; height: 561px; background: #e3e5e4; padding: 0 13px 0 12px; }
.dlg-top { height: 40px; display: flex; align-items: center; justify-content: space-between; padding-bottom: 3px; }
.dlg-title { font-size: 13px; color: #444; margin-left: -1px; }
.dlg-ctl { display: flex; gap: 17px; margin-right: -1px; }
.dlg-ctl svg { width: 11px; height: 11px; }
.dlg-filter { height: 24px; display: flex; align-items: center; }
.dtab { width: 62px; height: 24px; line-height: 25px; text-align: center; background: #dcdcdc; border-radius: 4px 4px 0 0; }
.dtab-on { width: 60px; background: #fff; color: #2a8af0; margin-right: 2px; border: 1px solid #ccc; border-bottom: 0; }
.flt { color: #444; flex: none; }
.flt-a { margin-left: 80px; margin-right: 12px; }
.flt-b { margin-left: 10px; margin-right: 9px; }
.dsel { position: relative; flex: none; height: 24px; line-height: 24px; background: #fff; border: 1px solid #ddd; border-radius: 3px; padding-left: 3px; }
.dsel-a { width: 148px; }
.dsel-b { width: 150px; }
.dlg-body { display: flex; gap: 4px; height: 490px; }
.tree { width: 154px; flex: none; background: #fff; border: 2px solid #c8c8c8; padding-top: 2px; }
.node { height: 24px; line-height: 24px; position: relative; padding-left: 44px; }
.tri { position: absolute; left: 11px; top: 8px; border: 3.500px solid transparent; border-left: 4px solid #888; border-right: 0; }
.node .tri-down { left: 8px; top: 10px; }
.fold { position: absolute; left: 22px; top: 6px; width: 15px; height: 13px; }
.leaf { height: 24px; line-height: 24px; position: relative; padding-left: 42px; }
.leaf-on { background: linear-gradient(#fff 2px, #c5dcf5 2px, #c5dcf5 22px, #fff 22px); background-size: 112px 100%; background-position: 39px 0; background-repeat: no-repeat; }
.tri-in { left: 31px; }
.rules { width: 615px; flex: none; }
.rules-top { height: 311px; display: flex; background: #fff; border: 1px solid #c8c8c8; border-width: 1px 0 0 1px; }
.rules-clip { width: 601px; height: 310px; overflow: hidden; }
.rail { width: 14px; background: #fff; padding: 42px 3px 0 4px; }
.rail i { display: block; height: 172px; background: #c8c8c8; border-radius: 4px; }
.related { height: 19px; margin-top: 3px; border: 1px solid #a8a8a8; background: #fff; text-align: center; line-height: 18px; }
.rules-low { height: 150px; margin-top: 7px; background: #fff; border: 2px solid #c8c8c8; border-width: 1px 1px 2px 1px; }
.rt { border-collapse: collapse; table-layout: fixed; }
.r-n { width: 18px; } .r-d { width: 270px; } .r-o { width: 313px; }
.r-d2 { width: 276px; } .r-o2 { width: 319px; }
.rt-low { width: 613px; }
.rt td { height: 21px; padding: 0 0 1px; border: 1px solid #d6d6d6; white-space: nowrap; overflow: hidden; }
.rt-head td { background: #f0f0f0; text-align: center; }
.rt-head .rt-hot { background: #7eb8f7; color: #fff; font-weight: 700; }
.rn { background: #f0f0f0; text-align: center; color: #555; }
.rn-on { background: #7eb8f7; color: #fff; font-weight: 700; }
.rd { background: #fffde8; padding-left: 2px !important; }
.ro { padding-left: 2px !important; }
.ro em { display: inline-block; width: 18px; }
.ro-low { padding-left: 3px !important; }
.ro-low em { width: 16px; }
.ro-tight em { width: 12px; }
.ro-mint { background: #dcf5ea; }
.ro-edit { border: 1px solid #4d9ef5 !important; position: relative; }
.ro-edit mark { background: #a3c2ea; color: #3a3a3a; padding: 0 1px; margin-left: 2px; }
.ro-edit .caret { position: absolute; right: 10px; top: 8px; border-top-color: #555; }

.arrows { position: absolute; left: 0; top: 0; width: 1279px; height: 769px; pointer-events: none; fill: #f4403f; }
```
